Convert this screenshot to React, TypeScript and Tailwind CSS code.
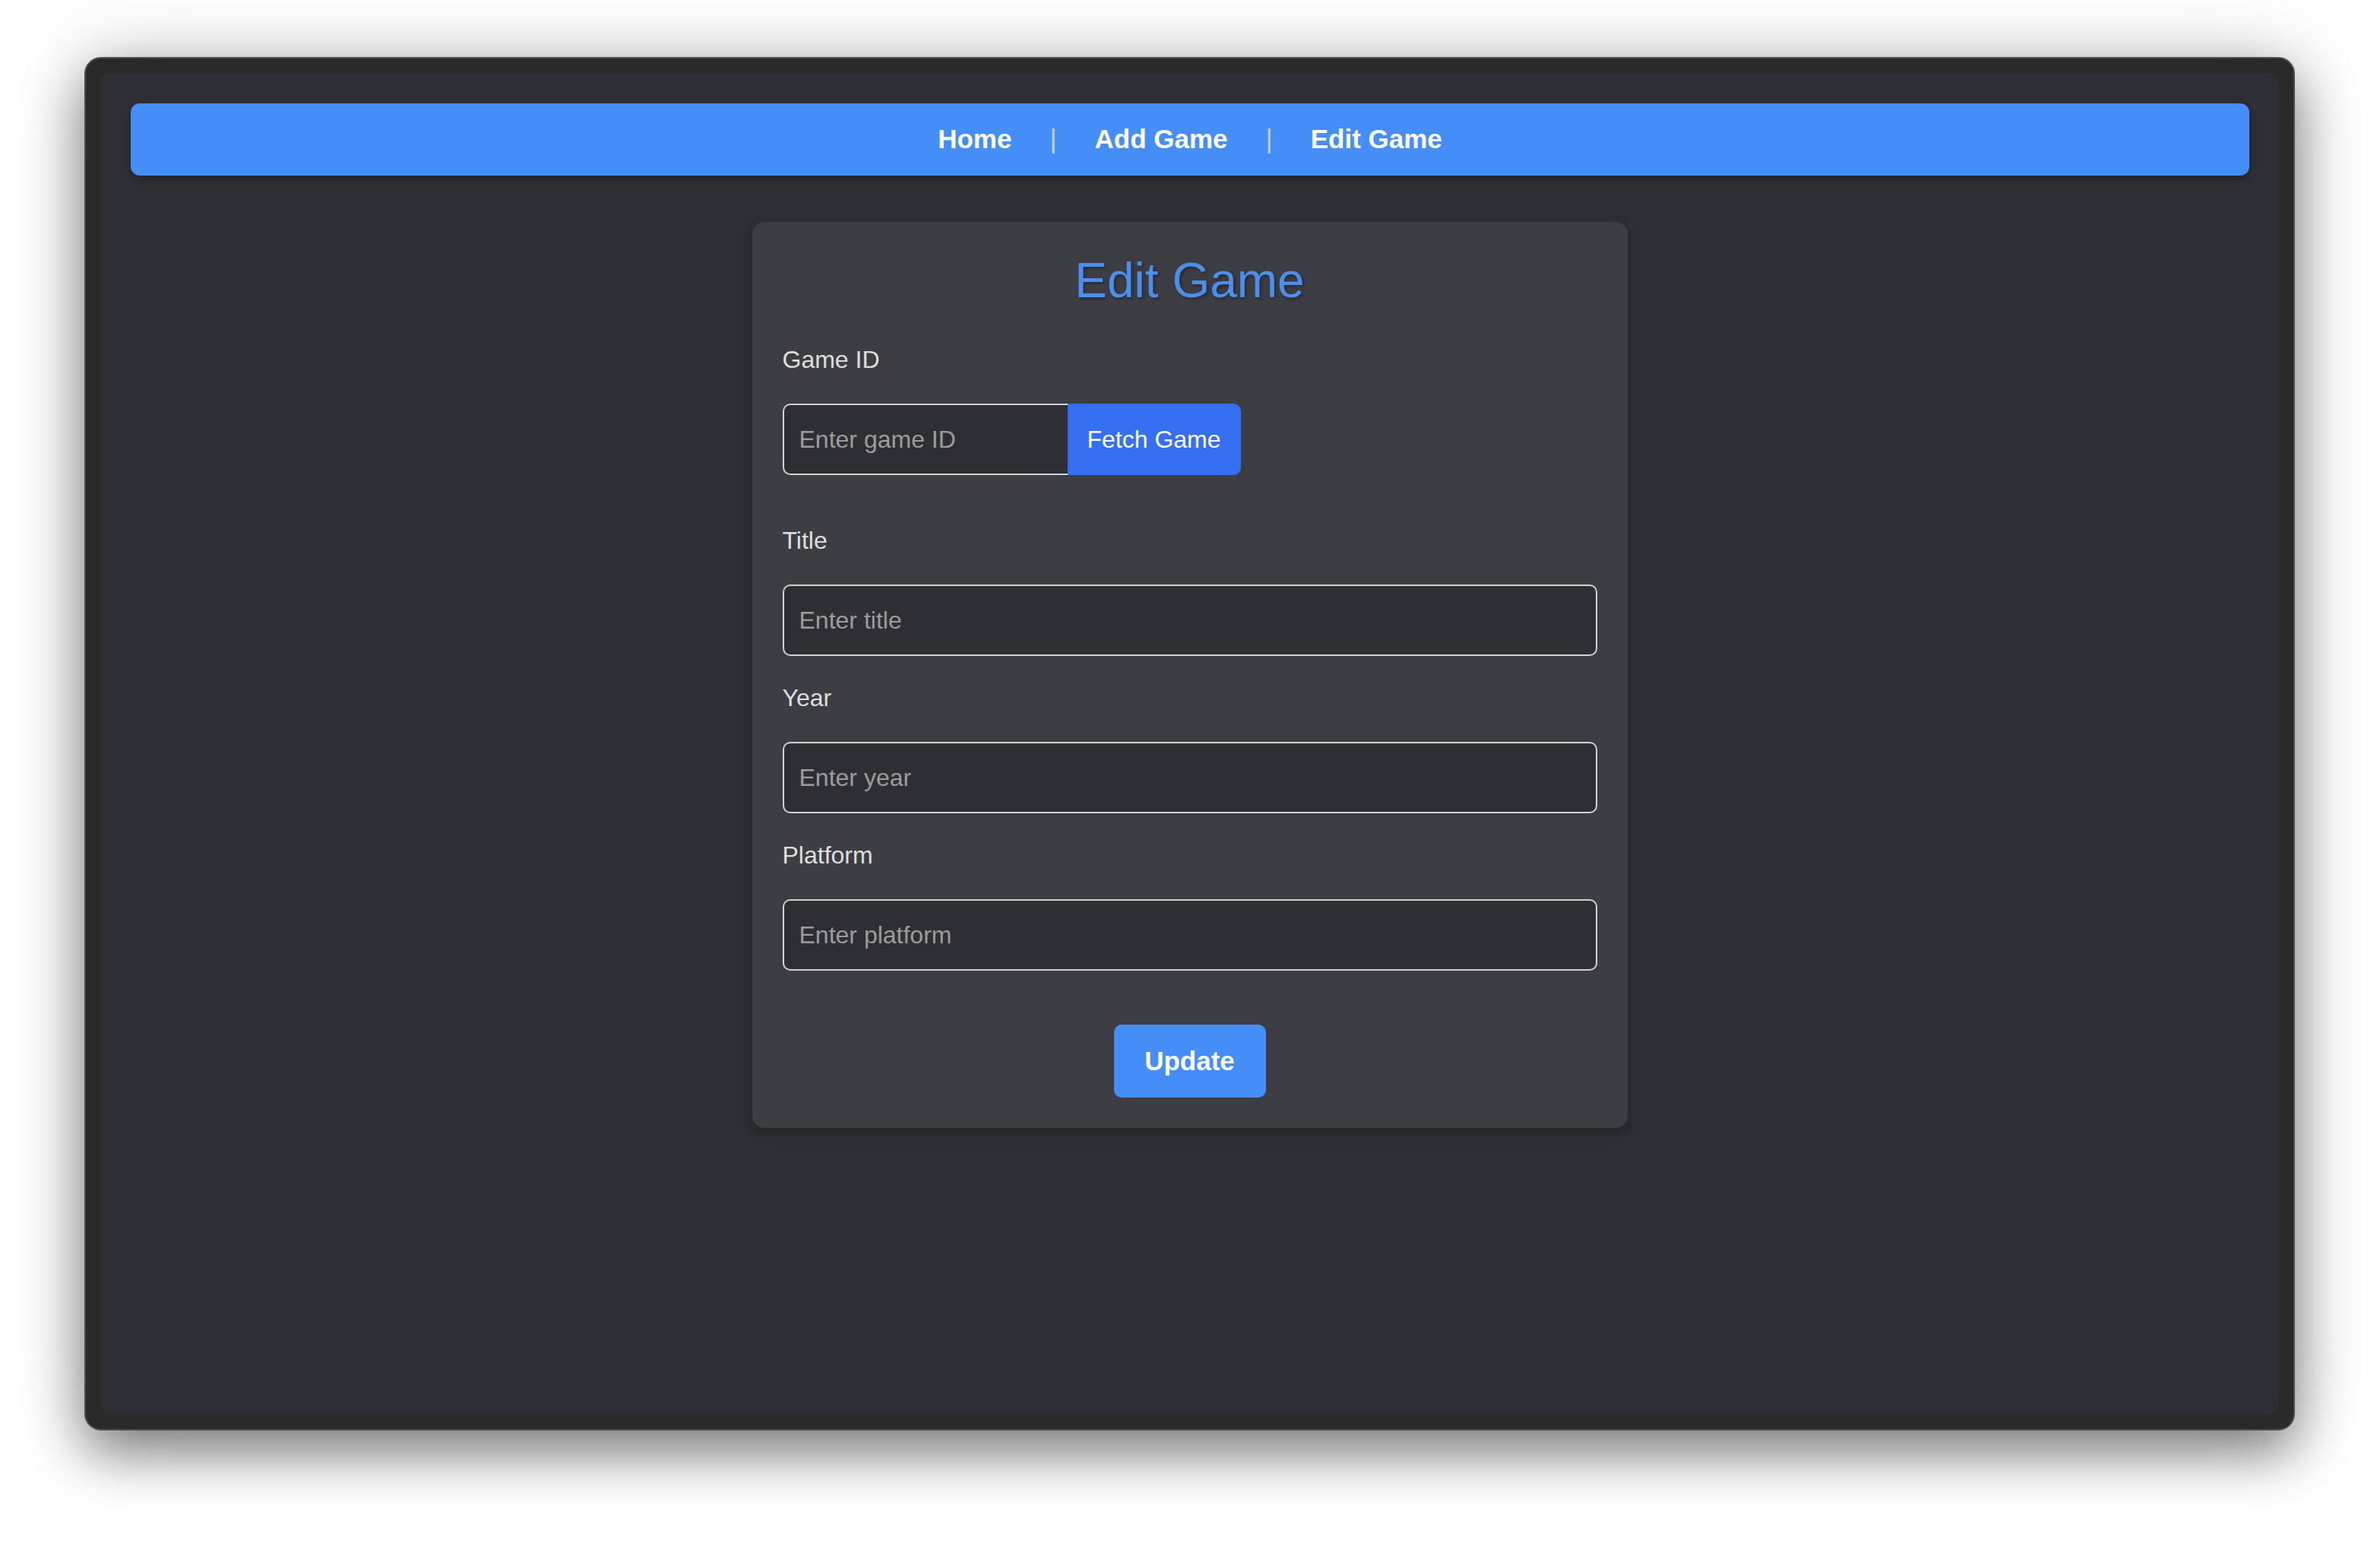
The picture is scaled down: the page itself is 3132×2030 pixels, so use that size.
import React from "react";

const font = { fontFamily: '"Liberation Sans", Arial, Helvetica, sans-serif' };

function Field({ label, placeholder }: { label: string; placeholder: string }) {
  return (
    <div className="flex flex-col">
      <label className="block h-[37px] leading-[37px] text-[32px] text-[#dedede] mb-[39px]">{label}</label>
      <input
        placeholder={placeholder}
        className="h-[94px] w-full rounded-[10px] border-2 border-[#d2d2d2] bg-[#2e2f34] px-[20px] text-[32px] text-[#e0e0e0] placeholder:text-[#9c9c9c] outline-none"
        style={font}
      />
    </div>
  );
}

export default function App() {
  return (
    <div className="min-h-screen w-full bg-white" style={font}>
      <div className="pt-[75px] pl-[111px] pb-[148px]">
        <div className="w-[2909px] h-[1807px] rounded-[22px] bg-[#2a2a2a] border-2 border-[#4d4d4d] p-[19px] shadow-[0_30px_70px_rgba(0,0,0,0.45),0_0_110px_rgba(0,0,0,0.18)]">
          <div className="h-full w-full rounded-[14px] bg-[#2e2f34] pt-[40px] pl-[40px] pr-[39px] flex flex-col">
            <nav className="h-[95px] w-full rounded-[12px] bg-[#458ef7] flex items-center justify-center gap-[50px] shadow-[0_4px_10px_rgba(0,0,0,0.25)]">
              <a className="text-[35px] font-bold text-white">Home</a>
              <span className="text-[35px] text-[#c9cfd8]">|</span>
              <a className="text-[35px] font-bold text-white">Add Game</a>
              <span className="text-[35px] text-[#c9cfd8]">|</span>
              <a className="text-[35px] font-bold text-white">Edit Game</a>
            </nav>
            <div className="flex justify-center pr-[1px]">
              <div className="mt-[61px] w-[1152px] rounded-[16px] bg-[#3d3e43] p-[40px] shadow-[0_6px_16px_rgba(0,0,0,0.25)] flex flex-col">
                <h2 className="text-center text-[64px] leading-[74px] text-[#4a8fee] mb-[49px] [text-shadow:2px_2px_4px_rgba(0,0,0,0.35)]">
                  Edit Game
                </h2>
                <div className="flex flex-col">
                  <label className="block h-[37px] leading-[37px] text-[32px] text-[#dedede] mb-[39px]">Game ID</label>
                  <div className="flex">
                    <input
                      placeholder="Enter game ID"
                      className="h-[94px] w-[375px] rounded-l-[10px] border-2 border-r-0 border-[#d2d2d2] bg-[#2e2f34] px-[20px] text-[32px] text-[#e0e0e0] placeholder:text-[#9c9c9c] outline-none"
                      style={font}
                    />
                    <button
                      className="h-[94px] w-[228px] rounded-r-[10px] bg-[#356ff2] text-[32px] text-white"
                      style={font}
                    >
                      Fetch Game
                    </button>
                  </div>
                </div>
                <div className="mt-[68px] flex flex-col gap-[37px]">
                  <Field label="Title" placeholder="Enter title" />
                  <Field label="Year" placeholder="Enter year" />
                  <Field label="Platform" placeholder="Enter platform" />
                </div>
                <div className="mt-[71px] flex justify-center">
                  <button
                    className="h-[96px] w-[200px] rounded-[10px] bg-[#458ef7] text-[35px] font-bold text-white"
                    style={font}
                  >
                    Update
                  </button>
                </div>
              </div>
            </div>
          </div>
        </div>
      </div>
    </div>
  );
}
